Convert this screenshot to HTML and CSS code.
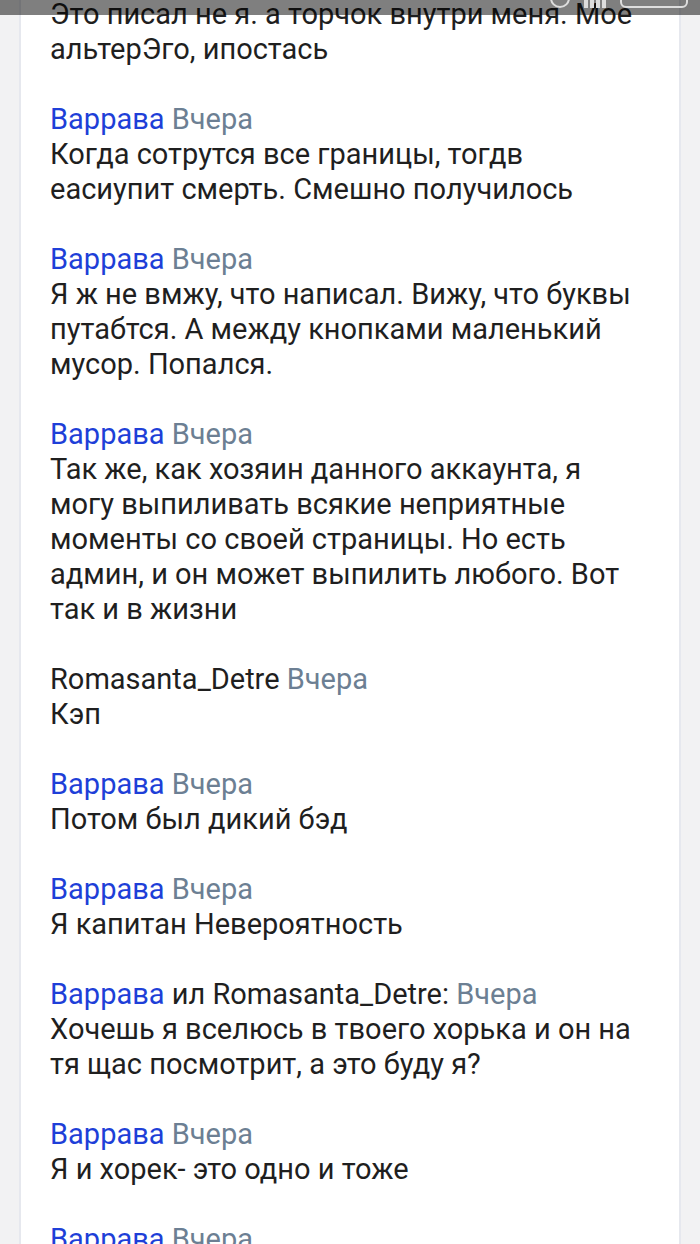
FILE: index.html
```html
<!DOCTYPE html>
<html lang="ru">
<head>
<meta charset="utf-8">
<link rel="stylesheet" href="styles.css">
</head>
<body>
<div class="statusbar">
  <span class="sb-time">1:07</span>
  <span class="sb-icons"><span class="sb-dot"></span><span class="sb-bars"><i></i><i></i><i></i><i></i></span><span class="sb-batt"></span></span>
</div>
<main class="card">
  <div class="comment">
    <p class="text">Это писал не я. а торчок внутри меня. Мое альтерЭго, ипостась</p>
  </div>
  <div class="comment">
    <div class="head"><span class="name">Варрава</span> <span class="date">Вчера</span></div>
    <p class="text">Когда сотрутся все границы, тогдв еасиупит смерть. Смешно получилось</p>
  </div>
  <div class="comment">
    <div class="head"><span class="name">Варрава</span> <span class="date">Вчера</span></div>
    <p class="text">Я ж не вмжу, что написал. Вижу, что буквы путабтся. А между кнопками маленький мусор. Попался.</p>
  </div>
  <div class="comment">
    <div class="head"><span class="name">Варрава</span> <span class="date">Вчера</span></div>
    <p class="text">Так же, как хозяин данного аккаунта, я могу выпиливать всякие неприятные моменты со своей страницы. Но есть админ, и он может выпилить любого. Вот так и в жизни</p>
  </div>
  <div class="comment">
    <div class="head"><span class="plain">Romasanta_Detre</span> <span class="date">Вчера</span></div>
    <p class="text">Кэп</p>
  </div>
  <div class="comment">
    <div class="head"><span class="name">Варрава</span> <span class="date">Вчера</span></div>
    <p class="text">Потом был дикий бэд</p>
  </div>
  <div class="comment">
    <div class="head"><span class="name">Варрава</span> <span class="date">Вчера</span></div>
    <p class="text">Я капитан Невероятность</p>
  </div>
  <div class="comment">
    <div class="head"><span class="name">Варрава</span> <span class="plain">ил Romasanta_Detre:</span> <span class="date">Вчера</span></div>
    <p class="text">Хочешь я вселюсь в твоего хорька и он на тя щас посмотрит, а это буду я?</p>
  </div>
  <div class="comment">
    <div class="head"><span class="name">Варрава</span> <span class="date">Вчера</span></div>
    <p class="text">Я и хорек- это одно и тоже</p>
  </div>
  <div class="comment">
    <div class="head"><span class="name">Варрава</span> <span class="date">Вчера</span></div>
    <p class="text">Я</p>
  </div>
</main>
</body>
</html>
```
FILE: styles.css
```css
html, body {
  margin: 0;
  padding: 0;
  background: #f2f2f3;
  height: 1244px;
  overflow: hidden;
}
body {
  font-family: Roboto, "Noto Sans", sans-serif;
  font-size: 29px;
  line-height: 35px;
  color: #1f1f1f;
}
.statusbar {
  position: fixed;
  top: 0;
  left: 0;
  right: 0;
  height: 15px;
  background: rgba(0, 0, 0, 0.5);
  z-index: 10;
  overflow: hidden;
  color: #fff;
  font-size: 20px;
  line-height: 20px;
}
.sb-time {
  position: absolute;
  left: 8px;
  top: -17px;
}
.sb-icons {
  position: absolute;
  right: 12px;
  top: -14px;
  display: flex;
  gap: 14px;
  align-items: flex-end;
}
.sb-dot {
  width: 16px;
  height: 16px;
  border: 2px solid #ddd;
  border-radius: 50%;
}
.sb-bars {
  display: flex;
  gap: 2px;
  align-items: flex-end;
}
.sb-bars i {
  width: 4px;
  height: 16px;
  background: #ddd;
}
.sb-batt {
  display: inline-block;
  width: 64px;
  height: 18px;
  border: 2px solid #ddd;
  border-radius: 6px;
}
.card {
  margin: -3px 19px 0 19px;
  background: #fff;
  border-left: 2px solid #e6e8ee;
  border-right: 2px solid #e6e8ee;
  padding: 0 40px 0 29px;
  min-height: 1300px;
}
.comment {
  margin-bottom: 35px;
}
.head {
  white-space: nowrap;
}
.name {
  color: #1e3fd8;
}
.date {
  color: #6c7f93;
}
.plain {
  color: #1f1f1f;
}
.text {
  margin: 0;
}
```
